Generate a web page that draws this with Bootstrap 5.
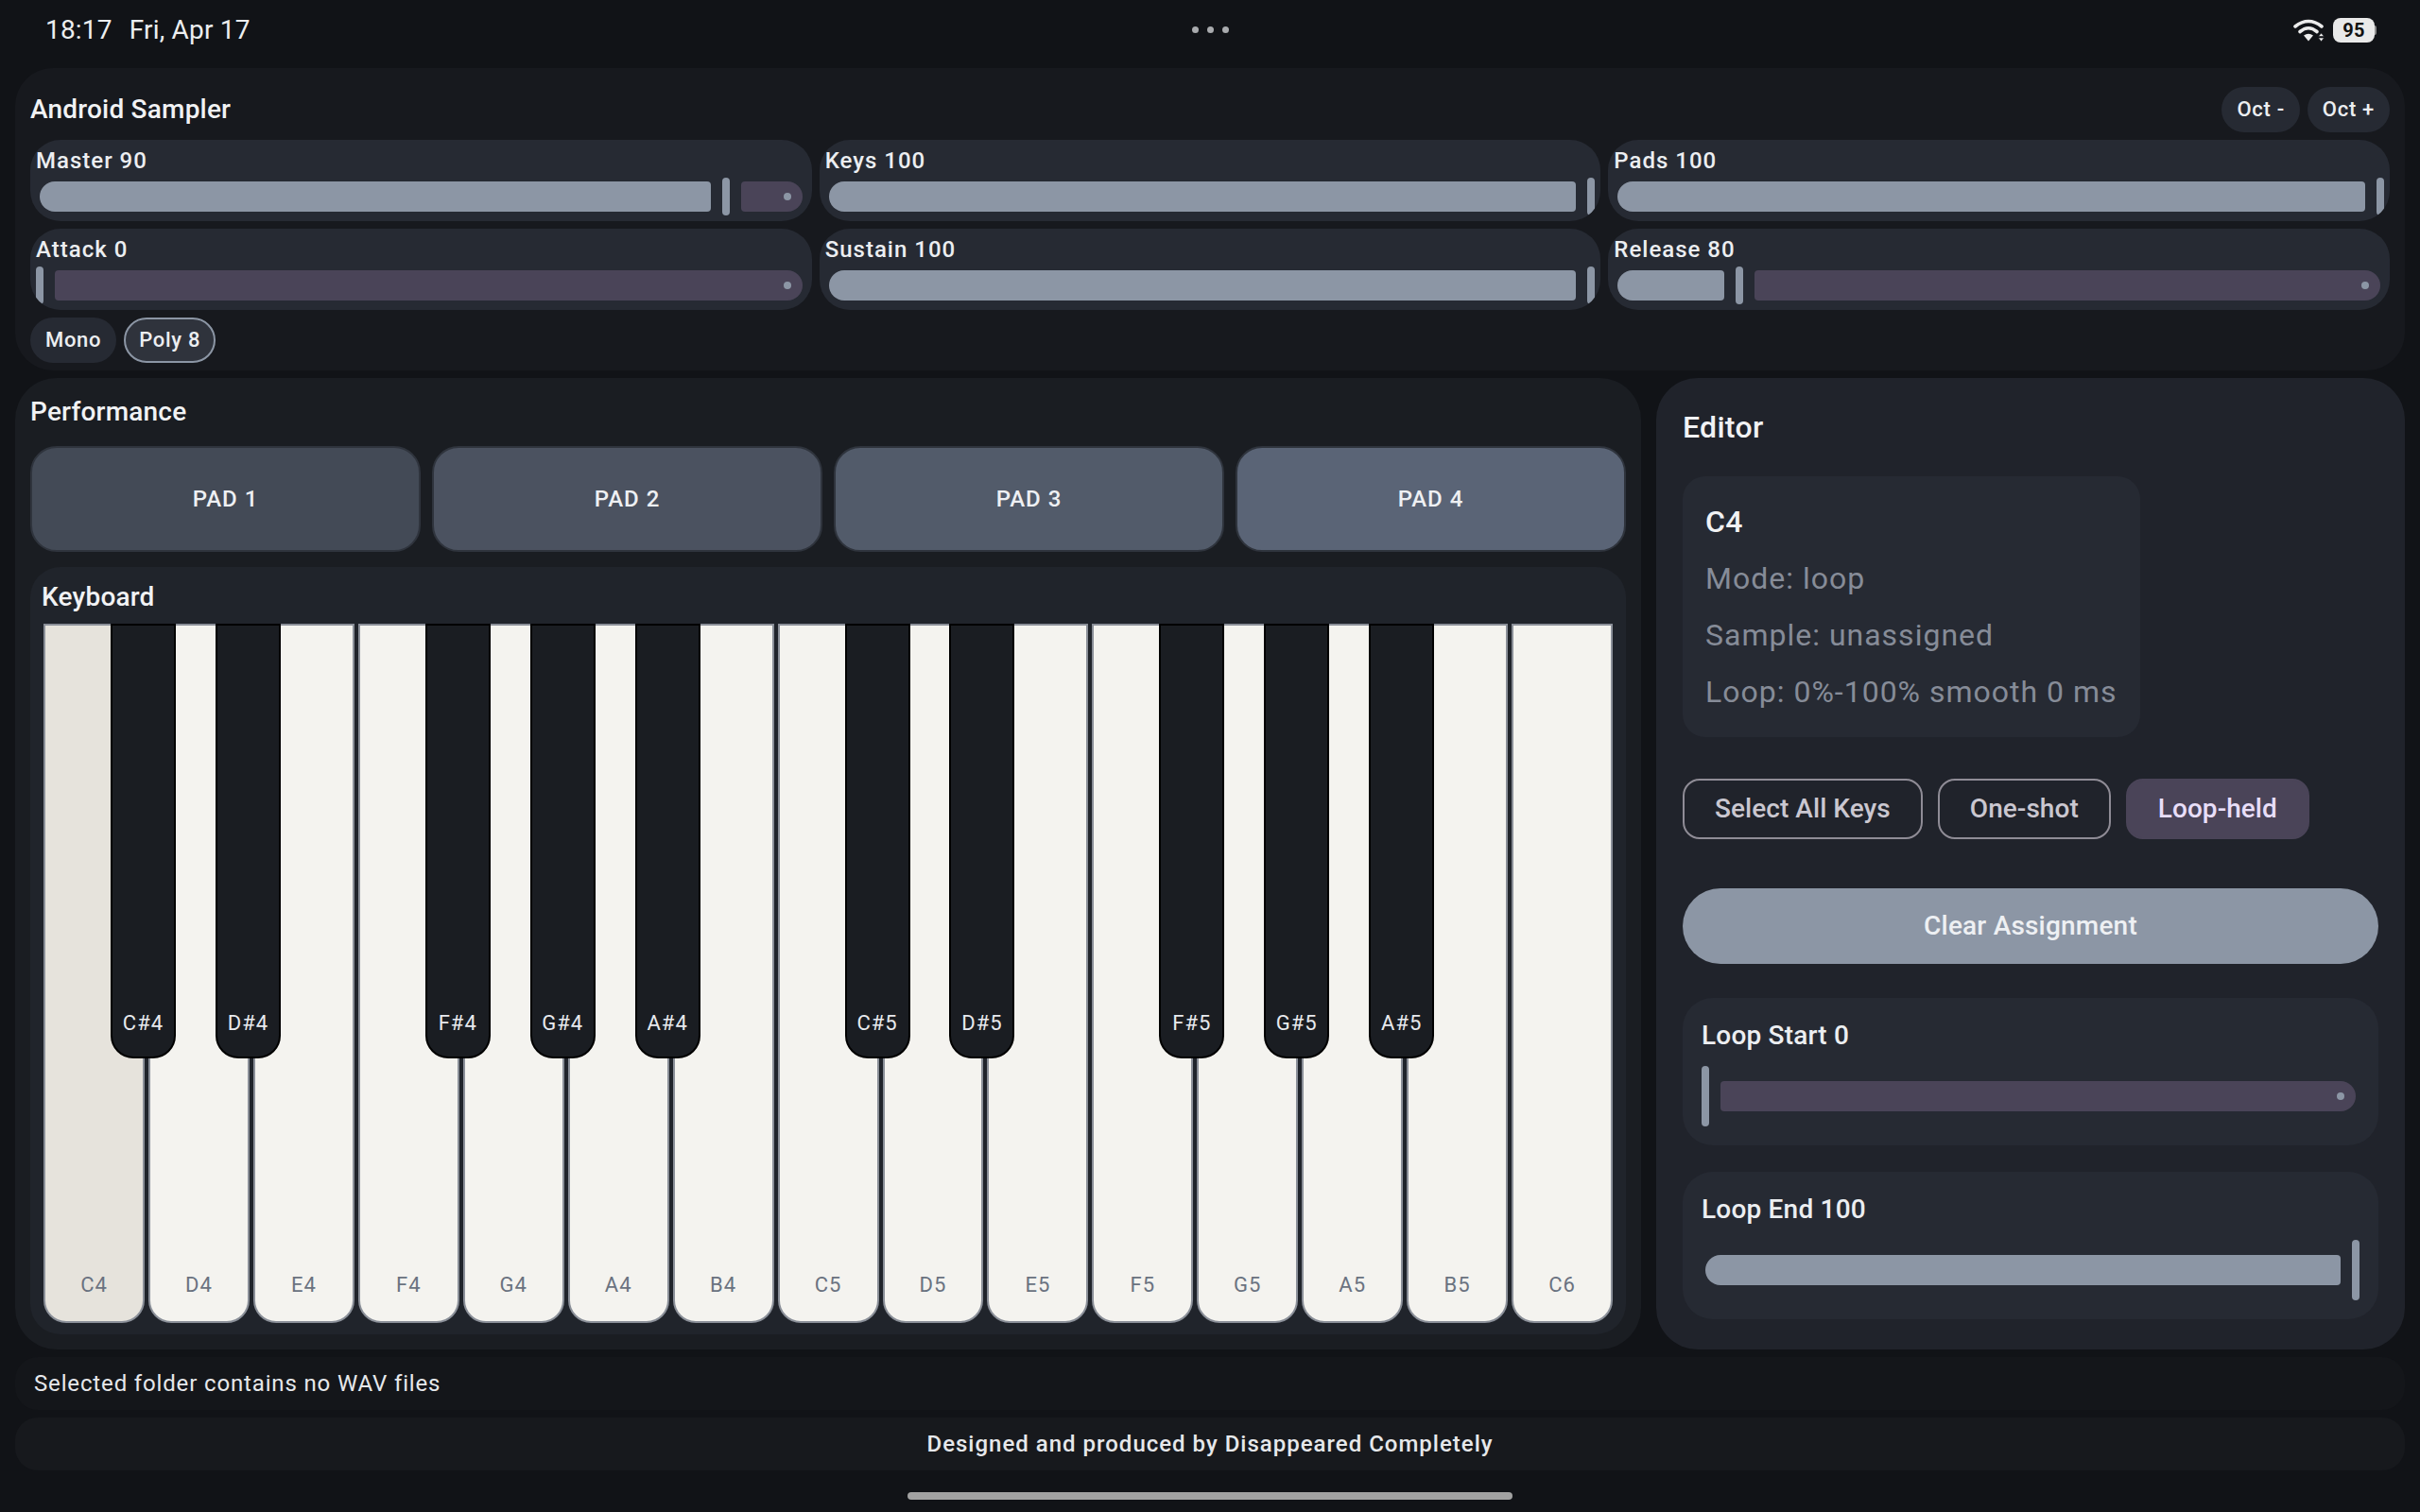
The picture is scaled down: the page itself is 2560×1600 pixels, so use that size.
<!doctype html>
<html lang="en">
<head>
    <meta charset="utf-8">
    <meta name="viewport" content="width=device-width, initial-scale=1">
    <title>Android Sampler</title>
    <link href="https://cdn.jsdelivr.net/npm/bootstrap@5.3.0/dist/css/bootstrap.min.css" rel="stylesheet">
    <style>
        body {
            width: 2560px;
            height: 1600px;
            overflow: hidden;
            background: #111317;
            color: #eceef1;
            font-family: Roboto, "Liberation Sans", sans-serif;
        }
        .sys-bar {
            height: 72px;
            padding: 0 46px 8px 48px;
            font-size: 28px;
            letter-spacing: .2px;
            color: #eceef0;
        }
        .sys-side { flex: 1 1 0; }
        .sys-time { gap: 18px; }
        .sys-dots { gap: 9px; margin: -2px 0 0 -2px; }
        .sys-dot { width: 7px; height: 7px; border-radius: 50%; background: #a9abae; }
        .batt {
            width: 44px;
            height: 26px;
            border-radius: 8px;
            background: #e9e9e9;
            color: #111;
            font-size: 20px;
            font-weight: 700;
            line-height: 26px;
            text-align: center;
        }
        .batt-nub { width: 2px; height: 10px; background: #8d8d8d; border-radius: 0 2px 2px 0; }
        .page-main { padding: 0 16px; }

        .top-panel {
            height: 320px;
            padding: 20px 16px 8px;
            background: #17191e;
            border-radius: 40px;
            margin-bottom: 8px;
        }
        .head-row { height: 48px; margin-bottom: 8px; }
        .title-sm { font-size: 28px; font-weight: 500; letter-spacing: .2px; color: #f1f2f4; }
        .chip {
            height: 48px;
            padding: 0 16px;
            border-radius: 24px;
            border: 0;
            background: #262a33;
            color: #eceef1;
            font-size: 22px;
            font-weight: 500;
            letter-spacing: .7px;
            line-height: 48px;
        }
        .chip-on {
            padding: 0 14px;
            line-height: 44px;
            background: #2f333c;
            border: 2px solid #8c96a5;
        }
        .sld-box {
            height: 86px;
            padding: 6px;
            border-radius: 32px;
            background: #262a33;
            overflow: hidden;
        }
        .sld-label {
            height: 34px;
            line-height: 32px;
            font-size: 24px;
            font-weight: 500;
            letter-spacing: 1px;
            color: #eceef1;
        }
        .sld { height: 40px; gap: 12px; }
        .sld-on {
            flex: none;
            width: calc((100% - 8px) * var(--v) - 16px);
            height: 32px;
            margin-left: 4px;
            background: #8c96a5;
            border-radius: 16px 4px 4px 16px;
        }
        .sld-knob { flex: none; width: 8px; height: 100%; border-radius: 4px; background: #8c96a5; }
        .sld-off {
            position: relative;
            flex: 1 1 0;
            min-width: 0;
            height: 32px;
            margin-right: 4px;
            background: #4a4458;
            border-radius: 4px 16px 16px 4px;
        }
        .sld-off::after {
            content: "";
            position: absolute;
            right: 12px;
            top: 12px;
            width: 8px;
            height: 8px;
            border-radius: 50%;
            background: #8c96a5;
        }
        .mode-row { margin-top: 8px; }

        .perf-panel {
            flex: 1 1 0;
            height: 1028px;
            padding: 16px;
            border-radius: 44px;
            background: #1a1d22;
        }
        .perf-title { height: 40px; line-height: 40px; margin-bottom: 16px; }
        .pad-row { gap: 12px; }
        .pad-btn {
            flex: 1 1 0;
            height: 112px;
            border: 2px solid #2f343d;
            border-radius: 28px;
            color: #eef0f3;
            font-size: 24px;
            font-weight: 500;
            letter-spacing: 1px;
        }
        .pad-a { background: #434a56; }
        .pad-b { background: #4b5260; }
        .pad-c { background: #525b6a; }
        .pad-d { background: #5a6476; }
        .kbd-panel {
            height: 812px;
            margin-top: 16px;
            padding: 12px 14px;
            border-radius: 32px;
            background: #20242b;
        }
        .kbd-title { height: 40px; line-height: 40px; margin: 0 0 8px -2px; }
        .kbd { height: 740px; gap: 4px; }
        .w-key {
            position: relative;
            flex: 1 1 0;
            padding-bottom: 24px;
            background: #f4f3ef;
            border: 2px solid #8a8f98;
            border-radius: 0 0 24px 24px;
            color: #6a7280;
            font-size: 22px;
            font-weight: 400;
            letter-spacing: 1px;
            line-height: 28px;
        }
        .w-key-sel { background: #e6e3dc; }
        .b-key {
            position: absolute;
            top: -2px;
            left: -42px;
            z-index: 2;
            width: 69px;
            height: 460px;
            padding-bottom: 21px;
            background: #1a1d22;
            border: 2px solid #000;
            border-radius: 0 0 24px 24px;
            color: #e8eaee;
        }

        .edit-panel {
            width: 792px;
            height: 1028px;
            padding: 32px 28px;
            border-radius: 44px;
            background: #20232b;
        }
        .edit-title { font-size: 32px; font-weight: 500; letter-spacing: .3px; line-height: 40px; margin-bottom: 32px; color: #f1f2f4; }
        .info-card {
            width: fit-content;
            padding: 18px 24px;
            border-radius: 24px;
            background: #262a33;
            color: #868c98;
            font-size: 32px;
            letter-spacing: 1px;
            line-height: 60px;
        }
        .info-head { color: #f1f2f4; font-weight: 500; letter-spacing: .3px; }
        .edit-btns { margin-top: 44px; }
        .ed-btn {
            height: 64px;
            padding: 0 32px;
            border: 2px solid #8f8c96;
            border-radius: 18px;
            background: transparent;
            color: #cac7d0;
            font-size: 28px;
            font-weight: 500;
            letter-spacing: .05px;
            line-height: 1;
        }
        .ed-btn-on { background: #4a4458; border-color: #4a4458; color: #e8def8; }
        .clear-btn {
            width: 100%;
            height: 80px;
            margin-top: 52px;
            border: 0;
            border-radius: 40px;
            background: #8c96a5;
            color: #eef0f3;
            font-size: 28px;
            font-weight: 500;
            letter-spacing: .2px;
        }
        .loop-box {
            height: 156px;
            padding: 20px;
            border-radius: 32px;
            background: #262a33;
            overflow: hidden;
        }
        .loop-first { margin-top: 36px; margin-bottom: 28px; }
        .loop-label { height: 52px; line-height: 40px; font-size: 28px; font-weight: 500; letter-spacing: .2px; color: #eceef1; }
        .loop-sld { height: 64px; }

        .status-line {
            height: 56px;
            margin-top: 8px;
            padding: 0 20px;
            border-radius: 24px;
            background: #14161a;
            font-size: 24px;
            letter-spacing: .85px;
            line-height: 56px;
            color: #e6e8eb;
        }
        .foot-line {
            height: 56px;
            margin-top: 8px;
            border-radius: 24px;
            background: #17191d;
            font-size: 24px;
            font-weight: 500;
            letter-spacing: 1px;
            line-height: 56px;
            color: #e6e8eb;
        }
        .home-bar { width: 640px; height: 8px; margin: 23px auto 0; border-radius: 4px; background: #a2a2a2; }
    </style>
</head>
<body>
  <div class="sys-bar d-flex align-items-center">
    <div class="sys-side sys-time d-flex"><span>18:17</span><span>Fri, Apr 17</span></div>
    <div class="sys-dots d-flex justify-content-center">
      <span class="sys-dot"></span><span class="sys-dot"></span><span class="sys-dot"></span>
    </div>
    <div class="sys-side d-flex justify-content-end align-items-center">
      <svg class="me-2" width="34" height="25" viewBox="0 0 34 25" fill="none">
        <path d="M2 8Q16-3 30 8" stroke="#ececec" stroke-width="3.6" stroke-linecap="round"/>
        <path d="M7 13.5Q16 6 25 13.5" stroke="#ececec" stroke-width="3.6" stroke-linecap="round"/>
        <path d="M11 17.5Q16 14 21 17.5L16 23.5Z" fill="#ececec"/>
        <path d="M26.5 18.5 29.5 15 32.5 18.5ZM26.5 20 32.5 20 29.5 24Z" fill="#ececec" stroke="#111317" stroke-width=".6"/>
      </svg>
      <span class="batt">95</span><span class="batt-nub"></span>
    </div>
  </div>

  <div class="page-main">
    <section class="top-panel">
      <div class="head-row d-flex align-items-center justify-content-between">
        <span class="title-sm">Android Sampler</span>
        <div class="d-flex gap-2">
          <button class="chip">Oct -</button>
          <button class="chip">Oct +</button>
        </div>
      </div>
      <div class="row g-2">
        <div class="col-4">
          <div class="sld-box">
            <div class="sld-label">Master 90</div>
            <div class="sld d-flex align-items-center" style="--v:.9"><div class="sld-on"></div><div class="sld-knob"></div><div class="sld-off"></div></div>
          </div>
        </div>
        <div class="col-4">
          <div class="sld-box">
            <div class="sld-label">Keys 100</div>
            <div class="sld d-flex align-items-center" style="--v:1"><div class="sld-on"></div><div class="sld-knob"></div></div>
          </div>
        </div>
        <div class="col-4">
          <div class="sld-box">
            <div class="sld-label">Pads 100</div>
            <div class="sld d-flex align-items-center" style="--v:1"><div class="sld-on"></div><div class="sld-knob"></div></div>
          </div>
        </div>
        <div class="col-4">
          <div class="sld-box">
            <div class="sld-label">Attack 0</div>
            <div class="sld d-flex align-items-center"><div class="sld-knob"></div><div class="sld-off"></div></div>
          </div>
        </div>
        <div class="col-4">
          <div class="sld-box">
            <div class="sld-label">Sustain 100</div>
            <div class="sld d-flex align-items-center" style="--v:1"><div class="sld-on"></div><div class="sld-knob"></div></div>
          </div>
        </div>
        <div class="col-4">
          <div class="sld-box">
            <div class="sld-label">Release 80</div>
            <div class="sld d-flex align-items-center" style="--v:.16"><div class="sld-on"></div><div class="sld-knob"></div><div class="sld-off"></div></div>
          </div>
        </div>
      </div>
      <div class="mode-row d-flex gap-2">
        <button class="chip">Mono</button>
        <button class="chip chip-on">Poly 8</button>
      </div>
    </section>

    <div class="d-flex gap-3">
      <section class="perf-panel">
        <div class="title-sm perf-title">Performance</div>
        <div class="pad-row d-flex">
          <button class="btn pad-btn pad-a">PAD 1</button>
          <button class="btn pad-btn pad-b">PAD 2</button>
          <button class="btn pad-btn pad-c">PAD 3</button>
          <button class="btn pad-btn pad-d">PAD 4</button>
        </div>
        <div class="kbd-panel">
          <div class="title-sm kbd-title">Keyboard</div>
          <div class="kbd d-flex">
            <div class="w-key w-key-sel d-flex align-items-end justify-content-center">C4</div>
            <div class="w-key d-flex align-items-end justify-content-center">D4<div class="b-key d-flex align-items-end justify-content-center">C#4</div></div>
            <div class="w-key d-flex align-items-end justify-content-center">E4<div class="b-key d-flex align-items-end justify-content-center">D#4</div></div>
            <div class="w-key d-flex align-items-end justify-content-center">F4</div>
            <div class="w-key d-flex align-items-end justify-content-center">G4<div class="b-key d-flex align-items-end justify-content-center">F#4</div></div>
            <div class="w-key d-flex align-items-end justify-content-center">A4<div class="b-key d-flex align-items-end justify-content-center">G#4</div></div>
            <div class="w-key d-flex align-items-end justify-content-center">B4<div class="b-key d-flex align-items-end justify-content-center">A#4</div></div>
            <div class="w-key d-flex align-items-end justify-content-center">C5</div>
            <div class="w-key d-flex align-items-end justify-content-center">D5<div class="b-key d-flex align-items-end justify-content-center">C#5</div></div>
            <div class="w-key d-flex align-items-end justify-content-center">E5<div class="b-key d-flex align-items-end justify-content-center">D#5</div></div>
            <div class="w-key d-flex align-items-end justify-content-center">F5</div>
            <div class="w-key d-flex align-items-end justify-content-center">G5<div class="b-key d-flex align-items-end justify-content-center">F#5</div></div>
            <div class="w-key d-flex align-items-end justify-content-center">A5<div class="b-key d-flex align-items-end justify-content-center">G#5</div></div>
            <div class="w-key d-flex align-items-end justify-content-center">B5<div class="b-key d-flex align-items-end justify-content-center">A#5</div></div>
            <div class="w-key d-flex align-items-end justify-content-center">C6</div>
          </div>
        </div>
      </section>

      <section class="edit-panel">
        <div class="edit-title">Editor</div>
        <div class="info-card">
          <div class="info-head">C4</div>
          <div>Mode: loop</div>
          <div>Sample: unassigned</div>
          <div>Loop: 0%-100% smooth 0 ms</div>
        </div>
        <div class="edit-btns d-flex gap-3">
          <button class="btn ed-btn">Select All Keys</button>
          <button class="btn ed-btn">One-shot</button>
          <button class="btn ed-btn ed-btn-on">Loop-held</button>
        </div>
        <button class="btn clear-btn">Clear Assignment</button>
        <div class="loop-box loop-first">
          <div class="loop-label">Loop Start 0</div>
          <div class="sld loop-sld d-flex align-items-center"><div class="sld-knob"></div><div class="sld-off"></div></div>
        </div>
        <div class="loop-box">
          <div class="loop-label">Loop End 100</div>
          <div class="sld loop-sld d-flex align-items-center" style="--v:1"><div class="sld-on"></div><div class="sld-knob"></div></div>
        </div>
      </section>
    </div>

    <div class="status-line">Selected folder contains no WAV files</div>
    <div class="foot-line text-center">Designed and produced by Disappeared Completely</div>
  </div>
  <div class="home-bar"></div>

  <script src="https://cdn.jsdelivr.net/npm/bootstrap@5.3.0/dist/js/bootstrap.bundle.min.js"></script>
</body>
</html>
